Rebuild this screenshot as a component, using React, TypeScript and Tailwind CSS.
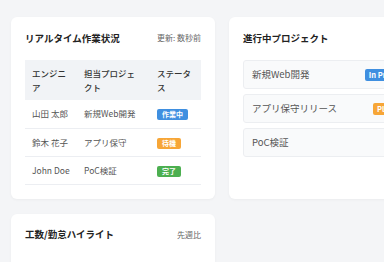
import React from 'react';

type Status = 'working' | 'waiting' | 'done';

const statusStyle: Record<Status, { label: string; cls: string }> = {
  working: { label: '作業中', cls: 'bg-[#3f8fe0]' },
  waiting: { label: '待機', cls: 'bg-[#f7a637]' },
  done: { label: '完了', cls: 'bg-[#4caf50]' },
};

const rows: { name: string; project: string; status: Status }[] = [
  { name: '山田 太郎', project: '新規Web開発', status: 'working' },
  { name: '鈴木 花子', project: 'アプリ保守', status: 'waiting' },
  { name: 'John Doe', project: 'PoC検証', status: 'done' },
];

const projects: { name: string; badge?: string; cls?: string }[] = [
  { name: '新規Web開発', badge: 'In Progress', cls: 'bg-[#3f8fe0]' },
  { name: 'アプリ保守リリース', badge: 'Planning', cls: 'bg-[#f7a637]' },
  { name: 'PoC検証' },
];

function Card({ title, note, children }: { title: string; note?: string; children?: React.ReactNode }) {
  return (
    <section className="bg-white rounded-[6px] shadow-[0_1px_3px_rgba(0,0,0,0.04)] px-[14px] pt-[14px] pb-[14px] overflow-hidden">
      <div className="flex items-center justify-between h-[14px] mb-[15px]">
        <h2 className="text-[9.5px] font-semibold text-[#222] whitespace-nowrap">{title}</h2>
        {note && <span className="text-[8px] text-[#666]">{note}</span>}
      </div>
      {children}
    </section>
  );
}

export default function App() {
  return (
    <div className="h-screen w-full overflow-hidden bg-[#f4f5f7] pt-[17px] pl-[11px] font-['Noto_Sans_CJK_JP','Noto_Sans',sans-serif]">
      <div className="grid grid-cols-[204px_204px] gap-x-[14px] gap-y-[15px]">
        <Card title="リアルタイム作業状況" note="更新: 数秒前">
          <table className="w-full table-fixed border-collapse text-[8.5px]">
            <colgroup>
              <col className="w-[52px]" />
              <col className="w-[73px]" />
              <col className="w-[51px]" />
            </colgroup>
            <thead>
              <tr className="bg-[#f1f3f6] text-[#333] text-left">
                <th className="font-medium px-[7px] py-[6px] leading-[14px] align-top">エンジニア</th>
                <th className="font-medium px-[7px] py-[6px] leading-[14px] align-top">担当プロジェクト</th>
                <th className="font-medium px-[7px] py-[6px] leading-[14px] align-top">ステータス</th>
              </tr>
            </thead>
            <tbody className="text-[#555]">
              {rows.map((r) => {
                const s = statusStyle[r.status];
                return (
                  <tr key={r.name} className="border-b border-[#eceef2] h-[28px]">
                    <td className="px-[7px] whitespace-nowrap">{r.name}</td>
                    <td className="px-[7px] whitespace-nowrap">{r.project}</td>
                    <td className="px-[7px]">
                      <span className={`inline-block ${s.cls} text-white text-[7px] font-semibold leading-[11px] px-[5px] rounded-[2px]`}>
                        {s.label}
                      </span>
                    </td>
                  </tr>
                );
              })}
            </tbody>
          </table>
        </Card>

        <Card title="進行中プロジェクト">
          <div className="flex flex-col gap-[5px]">
            {projects.map((p) => (
              <div
                key={p.name}
                className="flex items-center justify-between h-[29px] pl-[8px] pr-[4px] bg-[#f9fafb] border border-[#eceef1] rounded-[3px]"
              >
                <span className="text-[9.5px] text-[#555] whitespace-nowrap">{p.name}</span>
                {p.badge && (
                  <span className={`${p.cls} text-white text-[7.5px] font-semibold leading-[12px] px-[4px] rounded-[2px] whitespace-nowrap`}>
                    {p.badge}
                  </span>
                )}
              </div>
            ))}
          </div>
        </Card>

        <Card title="工数/勤怠ハイライト" note="先週比">
          <div className="h-[40px]" />
        </Card>
      </div>
    </div>
  );
}
